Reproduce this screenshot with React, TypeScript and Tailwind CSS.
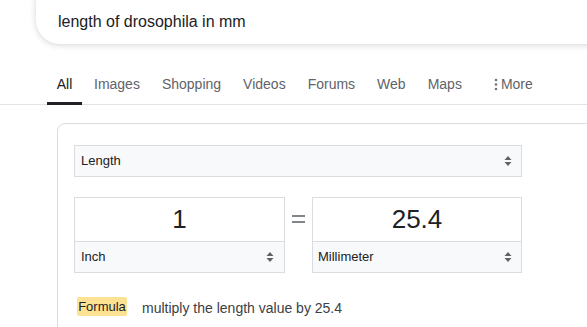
import React from 'react';

const tabs = ['Images', 'Shopping', 'Videos', 'Forums', 'Web', 'Maps'];

const Arrows = () => (
    <svg width="8" height="12" viewBox="0 0 8 12" className="shrink-0">
        <path d="M4 1 L7.5 5 H0.5 Z" fill="#5f6368" />
        <path d="M4 11 L7.5 7 H0.5 Z" fill="#5f6368" />
    </svg>
);

export default function App() {
    return (
        <div className="w-[587px] h-[327px] overflow-hidden bg-white font-['Liberation_Sans',Arial,sans-serif] text-[#202124]">
            {/* search box */}
            <div className="-mt-[20px] ml-[36px] w-[600px] h-[64px] pt-[20px] rounded-[24px] bg-white shadow-[0_1px_6px_rgba(32,33,36,0.2)]">
                <div className="h-[44px] flex items-center pl-[22px] text-[16px] text-[#202124]">
                    length of drosophila in mm
                </div>
            </div>

            {/* tabs */}
            <div className="mt-[30px] h-[31px] flex items-start pl-[47px]">
                <div className="w-[35px] flex flex-col items-center relative z-10">
                    <span className="text-[14px] leading-[20px] text-[#202124]">All</span>
                    <div className="mt-[8px] w-[35px] h-[3px] bg-[#202124]" />
                </div>
                <div className="ml-[12px] flex gap-[22px]">
                    {tabs.map(t => (
                        <span key={t} className="text-[14px] leading-[20px] text-[#5f6368]">
                            {t}
                        </span>
                    ))}
                </div>
                <div className="ml-[32px] flex items-center gap-[3px] text-[14px] leading-[20px] text-[#5f6368]">
                    <svg width="4" height="14" viewBox="0 0 4 14">
                        <circle cx="2" cy="3" r="1.3" fill="#70757a" />
                        <circle cx="2" cy="7.5" r="1.3" fill="#70757a" />
                        <circle cx="2" cy="12" r="1.3" fill="#70757a" />
                    </svg>
                    <span>More</span>
                </div>
            </div>
            <div className="-mt-[1px] h-px bg-[#e3e3e3]" />

            {/* converter card */}
            <div className="ml-[57px] mt-[18px] w-[560px] h-[240px] rounded-[8px] border border-[#dadce0] pt-[21px] pl-[16px]">
                <div className="w-[448px] h-[32px] bg-[#f8f9fa] border border-[#dadce0] flex items-center justify-between pl-[6px] pr-[9px] text-[13px] text-[#202124]">
                    <span>Length</span>
                    <Arrows />
                </div>

                <div className="mt-[20px] flex items-start">
                    <div className="w-[211px] border border-[#dadce0]">
                        <div className="h-[43px] bg-white flex items-center justify-center text-[26px] text-[#202124]">1</div>
                        <div className="h-[31px] border-t border-[#dadce0] bg-[#f8f9fa] flex items-center justify-between pl-[6px] pr-[10px] text-[13px]">
                            <span>Inch</span>
                            <Arrows />
                        </div>
                    </div>
                    <div className="w-[27px] h-[44px] flex items-center justify-center">
                        <div className="flex flex-col gap-[3.5px]">
                            <div className="w-[13px] h-[2.5px] bg-[#80868b]" />
                            <div className="w-[13px] h-[2.5px] bg-[#80868b]" />
                        </div>
                    </div>
                    <div className="w-[210px] border border-[#dadce0]">
                        <div className="h-[43px] bg-white flex items-center justify-center text-[26px] text-[#202124]">25.4</div>
                        <div className="h-[31px] border-t border-[#dadce0] bg-[#f8f9fa] flex items-center justify-between pl-[5px] pr-[9px] text-[13px]">
                            <span>Millimeter</span>
                            <Arrows />
                        </div>
                    </div>
                </div>

                <div className="mt-[20px] flex items-center pl-[3px]">
                    <span className="h-[19px] w-[50px] text-center rounded-[2px] bg-[#fde293] text-[13px] leading-[19px] text-[#202124]">Formula</span>
                    <span className="ml-[15px] mt-[5px] text-[14px] text-[#3c4043]">multiply the length value by 25.4</span>
                </div>
            </div>
        </div>
    );
}
